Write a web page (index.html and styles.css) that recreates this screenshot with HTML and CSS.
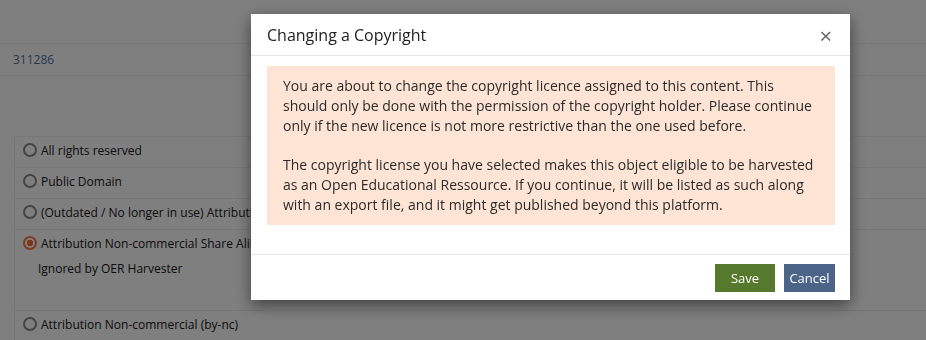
FILE: index.html
```html
<!DOCTYPE html>
<html lang="en">
<head>
    <meta charset="UTF-8">
    <meta name="viewport" content="width=device-width, initial-scale=1.0">
    <title>Changing a Copyright</title>
    <link rel="stylesheet" href="styles.css">
</head>
<body>
    <div class="page">
        <div class="topbar"></div>
        <div class="id-row"><a href="#">311286</a></div>

        <div class="license-list">
            <label class="license"><span class="radio"></span>All rights reserved</label>
            <label class="license"><span class="radio"></span>Public Domain</label>
            <label class="license"><span class="radio"></span>(Outdated / No longer in use) Attribution (by)</label>
            <div class="license selected">
                <label><span class="radio checked"></span>Attribution Non-commercial Share Alike (by-nc-sa)</label>
                <div class="note">Ignored by OER Harvester</div>
            </div>
            <label class="license"><span class="radio"></span>Attribution Non-commercial (by-nc)</label>
        </div>
    </div>

    <div class="backdrop"></div>

    <div class="modal">
        <div class="modal-header">
            <h4>Changing a Copyright</h4>
            <span class="close">&times;</span>
        </div>
        <div class="modal-body">
            <div class="alert">
                <p>You are about to change the copyright licence assigned to this content. This should only be done with the permission of the copyright holder. Please continue only if the new licence is not more restrictive than the one used before.</p>
                <p>The copyright license you have selected makes this object eligible to be harvested as an Open Educational Ressource. If you continue, it will be listed as such along with an export file, and it might get published beyond this platform.</p>
            </div>
        </div>
        <div class="modal-footer">
            <button class="btn save">Save</button>
            <button class="btn cancel">Cancel</button>
        </div>
    </div>
</body>
</html>
```

FILE: styles.css
```css
body {
    font-family: "Open Sans", "Liberation Sans", sans-serif;
    margin: 0;
    padding: 0;
    background-color: #fff;
    color: #161616;
}

.page {
    height: 340px;
    overflow: hidden;
}

.topbar {
    height: 43px;
    border-bottom: 1px solid #eee;
}

.id-row {
    height: 31px;
    line-height: 31px;
    padding-left: 13px;
    border-bottom: 1px solid #eee;
    font-size: 12px;
}

.id-row a {
    color: #52709a;
    text-decoration: none;
}

.license-list {
    margin: 60px 0 0 14px;
    border-top: 1px solid #eee;
    font-size: 12px;
}

.license {
    display: flex;
    align-items: center;
    height: 26px;
    padding: 0 0 4px 8px;
    border-bottom: 1px solid #eee;
    border-left: 1px solid #eee;
}

.license.selected {
    display: block;
    height: 80px;
    padding: 0 0 0 8px;
}

.license.selected label {
    display: flex;
    align-items: center;
    height: 26px;
    padding-bottom: 4px;
}

.note {
    padding-left: 15px;
    margin-top: 0;
}

.radio {
    width: 10px;
    height: 10px;
    border: 2px solid #888;
    border-radius: 50%;
    margin-right: 4px;
    box-sizing: content-box;
    display: inline-block;
}

.radio.checked {
    border-color: #ff7a45;
    background: radial-gradient(circle, #ff6a30 0 3px, #fff 3.5px);
}

.backdrop {
    position: fixed;
    inset: 0;
    background-color: rgba(0, 0, 0, 0.5);
}

.modal {
    position: fixed;
    left: 251px;
    top: 14px;
    width: 599px;
    background-color: #fff;
    box-shadow: 0 5px 15px rgba(0, 0, 0, 0.5);
    color: #333;
}

.modal-header {
    display: flex;
    justify-content: space-between;
    align-items: center;
    height: 41px;
    padding: 0 18px 0 16px;
    border-bottom: 1px solid #e5e5e5;
}

.modal-header h4 {
    margin: 0;
    font-size: 16px;
    font-weight: normal;
    color: #222;
}

.close {
    font-size: 22px;
    color: #666;
    line-height: 1;
}

.modal-body {
    padding: 10px 15px 29px 16px;
}

.alert {
    background-color: #fde4d4;
    padding: 10px 16px;
    font-size: 14px;
    line-height: 20px;
    color: #2b2b2b;
}

.alert p {
    margin: 0 0 19px;
}

.alert p:last-child {
    margin-bottom: 0;
}

.modal-footer {
    display: flex;
    justify-content: flex-end;
    gap: 9px;
    padding: 9px 15px 8px;
    border-top: 1px solid #e5e5e5;
}

.btn {
    height: 28px;
    border: none;
    color: #fff;
    font-family: inherit;
    font-size: 13px;
    cursor: pointer;
}

.btn.save {
    width: 60px;
    background-color: #557a2e;
}

.btn.cancel {
    width: 51px;
    padding: 0;
    background-color: #4c6487;
}
```
